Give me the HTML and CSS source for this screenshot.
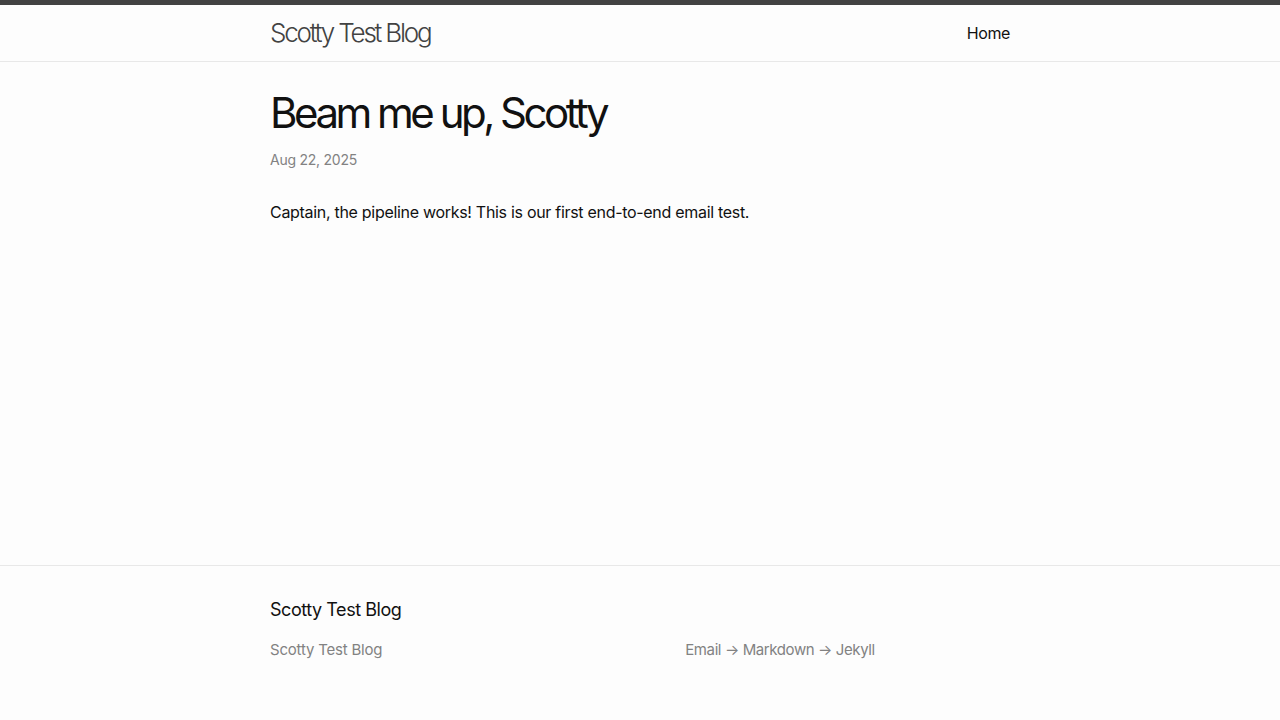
FILE: index.html
```html
<!DOCTYPE html>
<html lang="en">
<head>
<meta charset="utf-8">
<title>Beam me up, Scotty | Scotty Test Blog</title>
<link rel="stylesheet" href="styles.css">
</head>
<body>
<header class="site-header">
  <div class="wrapper header-row">
    <a class="site-title" href="#">Scotty Test Blog</a>
    <nav class="site-nav">
      <a class="page-link" href="#">Home</a>
    </nav>
  </div>
</header>
<main class="page-content">
  <div class="wrapper">
    <article class="post">
      <header class="post-header">
        <h1 class="post-title">Beam me up, Scotty</h1>
        <p class="post-meta">Aug 22, 2025</p>
      </header>
      <div class="post-content">
        <p>Captain, the pipeline works! This is our first end-to-end email test.</p>
      </div>
    </article>
  </div>
</main>
<footer class="site-footer">
  <div class="wrapper">
    <h2 class="footer-heading">Scotty Test Blog</h2>
    <div class="footer-col-wrapper">
      <div class="footer-col footer-col-1">
        <ul class="contact-list">
          <li>Scotty Test Blog</li>
        </ul>
      </div>
      <div class="footer-col footer-col-2"></div>
      <div class="footer-col footer-col-3">
        <p>Email → Markdown → Jekyll</p>
      </div>
    </div>
  </div>
</footer>
</body>
</html>
```

FILE: styles.css
```css
* { box-sizing: border-box; }
html, body { margin: 0; padding: 0; }
body {
  font-family: Inter, "Liberation Sans", sans-serif;
  font-size: 16px;
  line-height: 1.5;
  letter-spacing: -0.3px;
  color: #111;
  background: #fdfdfd;
  min-height: 100vh;
  display: flex;
  flex-direction: column;
}
a { text-decoration: none; }
h1, h2, p, ul { margin: 0; padding: 0; }

.wrapper {
  max-width: 800px;
  margin: 0 auto;
  padding: 0 30px;
}

.site-header {
  border-top: 5px solid #424242;
  border-bottom: 1px solid #e8e8e8;
  min-height: 56px;
}
.header-row {
  display: flex;
  justify-content: space-between;
  align-items: center;
}
.site-title {
  font-size: 26px;
  font-weight: 300;
  line-height: 56px;
  letter-spacing: -2.2px;
  color: #424242;
}
.page-link {
  color: #111;
  line-height: 54px;
  font-size: 16px;
  letter-spacing: -0.4px;
}

.page-content {
  padding: 30px 0;
  flex: 1;
}
.post-header { margin-bottom: 30px; }
.post-title {
  font-size: 42px;
  font-weight: 400;
  letter-spacing: -3.5px;
  line-height: 1;
  margin-bottom: 15px;
}
.post-meta {
  font-size: 14px;
  color: #828282;
  letter-spacing: -0.25px;
}
.post-content p { margin-bottom: 15px; }

.site-footer {
  border-top: 1px solid #e8e8e8;
  padding: 30px 0;
}
.footer-heading {
  font-size: 18px;
  font-weight: 400;
  letter-spacing: -0.45px;
  margin-bottom: 15px;
}
.footer-col-wrapper {
  display: flex;
  font-size: 15px;
  color: #828282;
  margin-left: -15px;
  letter-spacing: -0.3px;
}
.footer-col {
  padding-left: 15px;
  padding-top: 1px;
  margin-bottom: 14px;
}
.footer-col-1 { width: 35%; }
.footer-col-2 { width: 20%; }
.footer-col-3 { width: 45%; }
.contact-list { list-style: none; margin-bottom: 15px; }
.footer-col-3 p { margin-bottom: 15px; letter-spacing: -0.4px; }
.contact-list li { letter-spacing: -0.2px; }
```
